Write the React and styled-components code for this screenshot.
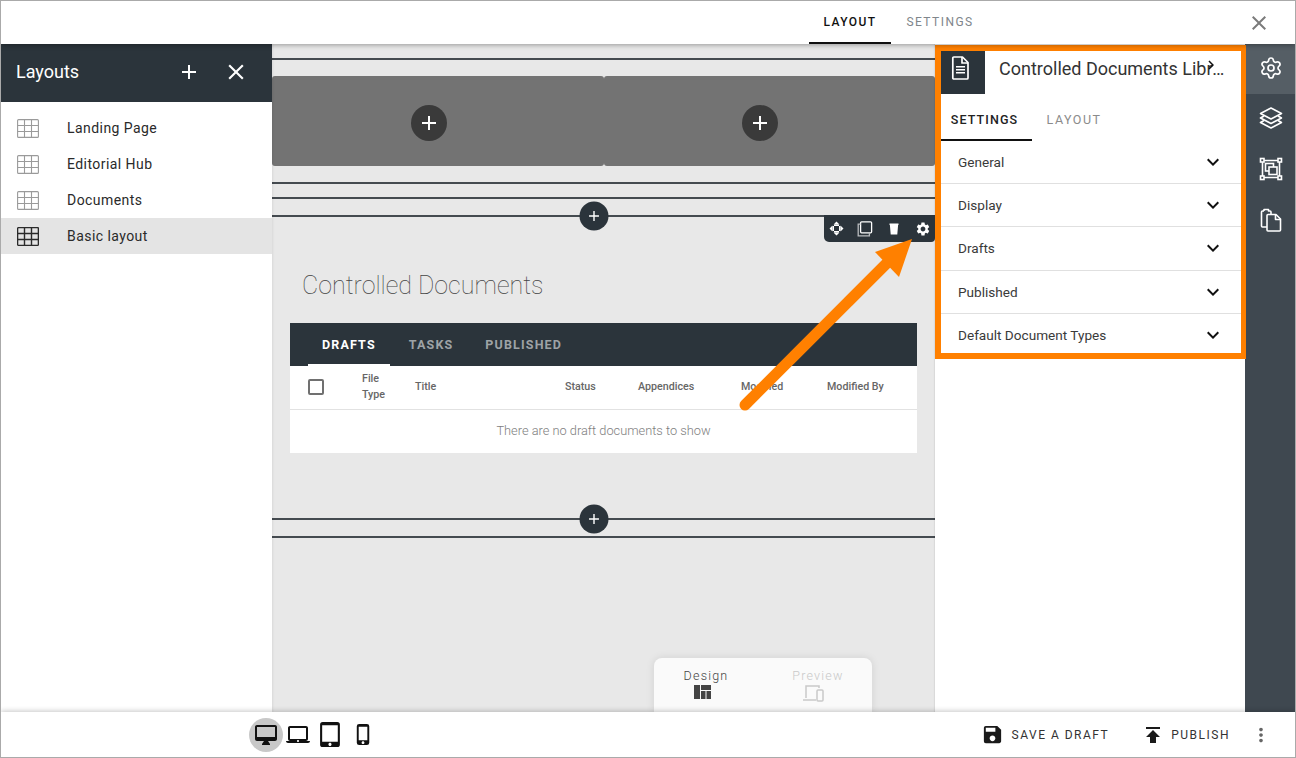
import React from "react";
import styled, { createGlobalStyle } from "styled-components";
import {
  MdAdd, MdClose, MdExpandMore, MdSave, MdPublish, MdMoreVert, MdOutlineDesktopMac, MdLaptopMac,
  MdTabletMac, MdPhoneIphone, MdSettings, MdChevronRight,
} from "react-icons/md";
import { Settings } from "lucide-react";

const Global = createGlobalStyle`
  html, body { margin: 0; padding: 0; background: #fff; }
  body { font-family: Roboto, "Liberation Sans", sans-serif; overflow: hidden; }
  * { box-sizing: border-box; }
`;

const Shell = styled.div`
  position: relative; width: 1296px; height: 758px; border: 1px solid #aaa;
  display: flex; flex-direction: column; background: #fff; overflow: hidden;
`;
const TopBar = styled.header`
  height: 43px; flex: none; display: flex; justify-content: flex-end; align-items: stretch;
  background: #fff; position: relative; z-index: 3; box-shadow: 0 1px 5px rgba(0,0,0,.35); padding-right: 24px;
`;
const TopTab = styled.div`
  width: ${p => p.$w}px; display: flex; align-items: center; justify-content: center; margin-right: ${p => p.$mr || 0}px;
  font-size: 12px; font-weight: ${p => (p.$active ? 500 : 400)}; letter-spacing: 1.45px;
  color: ${p => (p.$active ? "#111" : "#80868b")};
  border-bottom: 2px solid ${p => (p.$active ? "#111" : "transparent")};
`;
const TopClose = styled.div`
  display: flex; align-items: center; color: #7b7b7b; margin-left: 266px;
`;
const Main = styled.div`flex: 1; display: flex; min-height: 0;`;
const LeftPanel = styled.aside`
  width: 271px; flex: none; background: #fff; position: relative; z-index: 2; box-shadow: 1px 0 2px rgba(0,0,0,.07);
`;
const LeftHead = styled.div`
  height: 58px; background: #2b343b; color: #fff; display: flex; align-items: center; padding: 0 23px 3px 15px; margin-bottom: 8px;
`;
const LeftTitle = styled.div`flex: 1; font-size: 18px;`;
const HeadBtn = styled.span`display: flex; margin-left: ${p => p.$ml || 0}px;`;
const LayoutRow = styled.div`
  height: 36px; display: flex; align-items: center; padding-left: 16px; font-size: 14px; letter-spacing: .44px; color: #2a2a2a;
  background: ${p => (p.$active ? "#e4e4e4" : "transparent")};
`;
const RowLabel = styled.span`margin-left: 28px;`;

const Canvas = styled.main`
  width: 663px; flex: none; background: #e8e8e8; position: relative; padding-top: 14px;
`;
const Rule = styled.div`
  height: 2px; background: #454b50; position: relative; margin-top: ${p => p.$mt || 0}px;
`;
const RoundPlus = styled.div`
  position: absolute; left: 50%; top: 50%; transform: translate(-50%, -50%); width: 29px; height: 29px; border-radius: 50%;
  background: #2b343b; color: #fff; display: flex; align-items: center; justify-content: center; margin-left: -10px; z-index: 1;
`;
const Cells = styled.div`display: flex; margin: 16px 0 16px;`;
const Cell = styled.div`
  flex: 1; height: 90px; border-radius: 3px; background: #737373; display: flex; align-items: center; justify-content: center; padding: 4px 18px 0 0;
`;
const CellPlus = styled.div`
  width: 36px; height: 36px; border-radius: 50%; background: #3a3a3a; color: #fff; display: flex; align-items: center; justify-content: center;
`;
const WidgetBar = styled.div`
  position: absolute; right: 0; top: 171px; width: 111px; height: 27px; background: #2b343b; border-radius: 0 0 4px 5px;
  display: flex; align-items: center; justify-content: center; color: #fff; z-index: 1;
`;
const WidgetTool = styled.span`width: 29px; flex: none; display: flex; justify-content: center;`;
const WidgetArea = styled.section`padding: 0 18px 0 18px;`;
const WidgetTitle = styled.h2`
  margin: 53px 0 21px 12px; height: 32px; line-height: 32px; font-size: 25px; font-weight: 100; color: #444;
`;
const TableTabs = styled.div`
  height: 43px; background: #2b343b; display: flex; padding-left: 18px;
`;
const TableTab = styled.div`
  display: flex; align-items: center; padding: 2px 14px 0 14px; margin-right: ${p => p.$mr || 0}px; font-size: 12.5px; font-weight: 700; letter-spacing: 1.15px;
  color: ${p => (p.$active ? "#fff" : "#9ea3a6")}; border-bottom: 2px solid ${p => (p.$active ? "#fff" : "transparent")};
`;
const TableBody = styled.div`background: #fff;`;
const HeaderRow = styled.div`
  height: 44px; display: grid; grid-template-columns: 72px 53px 150px 73px 103px 86px 1fr; align-items: center;
  border-bottom: 1px solid #e2e2e2; font-size: 10.7px; font-weight: 500; color: #666; line-height: 16px; padding-bottom: 2px;
`;
const Check = styled.div`
  width: 16px; height: 16px; border: 2px solid #707070; border-radius: 2px; margin-left: 18px;
`;
const Empty = styled.div`
  height: 43px; display: flex; align-items: center; justify-content: center; font-size: 12.8px; font-weight: 300; color: #7e7e7e; padding-bottom: 3px;
`;
const ModeCard = styled.div`
  position: absolute; left: 382px; bottom: 0; width: 218px; height: 54px; background: #fafafa; border-radius: 8px 8px 0 0;
  box-shadow: 0 0 8px rgba(0,0,0,.1); display: flex; padding: 10px 0 0 16px; gap: 40px;
`;
const Mode = styled.div`
  width: 72px; display: flex; flex-direction: column; align-items: center; gap: 2px; font-size: 12.5px; font-weight: 300; letter-spacing: 1.2px;
  color: ${p => (p.$off ? "#c9c9c9" : "#444")};
`;
const ModeGlyph = styled.span`display: flex; margin-right: ${p => p.$mr}px;`;

const Panel = styled.aside`
  width: 310px; flex: none; background: #fff; position: relative; padding: 7px 4px 0 6px; box-shadow: -1px 0 1px rgba(0,0,0,.06);
`;
const Frame = styled.div`
  position: absolute; left: 0; top: 1px; width: 311px; height: 314px; border: solid #ff8000; border-width: 6px 5px 6px 6px; z-index: 2; pointer-events: none;
`;
const PanelHead = styled.div`height: 43px; display: flex; align-items: center; position: relative;`;
const DocBlock = styled.div`
  width: 44px; height: 43px; background: #2b343b; display: flex; align-items: flex-start; justify-content: center; padding: 5px 6px 0 0; flex: none;
`;
const PanelTitle = styled.div`
  margin-left: 14px; width: 226px; white-space: nowrap; overflow: hidden; text-overflow: ellipsis; font-size: 18px; color: #333; padding-bottom: 9px;
`;
const TitleCaret = styled.span`
  position: absolute; left: 261px; top: 5px; display: flex; color: #111;
`;
const PanelTabs = styled.div`display: flex; height: 47px;`;
const PanelTab = styled.div`
  width: ${p => p.$w}px; display: flex; align-items: center; justify-content: center; padding: 5px ${p => p.$pr || 0}px 0 0; font-size: 12.5px; font-weight: ${p => (p.$active ? 500 : 400)};
  letter-spacing: ${p => (p.$active ? 1.1 : 1.5)}px;
  color: ${p => (p.$active ? "#222" : "#8b8b8b")}; border-bottom: 2px solid ${p => (p.$active ? "#111" : "transparent")};
`;
const AccRow = styled.div`
  height: 43.2px; display: flex; align-items: center; justify-content: space-between; padding: 0 16px 0 17px; font-size: 13.6px; color: #3a3a3a;
  border-bottom: 1px solid ${p => (p.$last ? "transparent" : "#e0e0e0")};
`;
const AccChevron = styled.span`display: flex; color: #111;`;

const Rail = styled.nav`width: 50px; flex: none; background: #3f4850; color: #fff; position: relative; z-index: 1;`;
const RailItem = styled.div`
  height: ${p => p.$h}px; display: flex; align-items: center; justify-content: center; padding: 0 0 2px 2px; background: ${p => (p.$active ? "#555e65" : "transparent")};
`;

const BottomBar = styled.footer`
  height: 45px; flex: none; background: #fff; display: flex; align-items: center; position: relative; z-index: 3;
  box-shadow: 0 -1px 5px rgba(0,0,0,.22); padding-left: 248px;
`;
const DeviceBtn = styled.div`
  width: ${p => p.$w}px; height: 34px; display: flex; align-items: center; justify-content: center; border-radius: 50%; color: #111;
  background: ${p => (p.$active ? "#c8c8c8" : "transparent")};
`;
const Spacer = styled.div`flex: 1;`;
const Action = styled.div`
  display: flex; align-items: center; gap: ${p => p.$gap}px; font-size: 12px; letter-spacing: 1.5px; color: #333; margin-right: ${p => p.$mr}px;
`;
const ActionIcon = styled.span`display: flex; color: #1a1a1a;`;
const More = styled.span`display: flex; color: #666; margin-right: 23px;`;

const ArrowLayer = styled.svg`
  position: absolute; left: -1px; top: -1px; width: 1296px; height: 758px; z-index: 5; pointer-events: none;
`;

const GridIcon = ({ dark }) => (
  <svg width="22" height="19" viewBox="0 0 22 19" fill="none" stroke={dark ? "#2a2a2a" : "#9a9a9a"} strokeWidth={dark ? 1.4 : 1.1}>
    <rect x=".6" y=".6" width="20.8" height="17.8" rx="1" />
    <path d="M7.5 .6v17.8M14.5 .6v17.8M.6 6.500h20.8M.6 12.500h20.8" />
  </svg>
);
const MoveIcon = () => (
  <svg width="15" height="15" viewBox="0 0 15 15" fill="#fff">
    <path d="M7.500 .5 10.500 3.500H4.500ZM7.500 14.500 4.500 11.500H10.500ZM.5 7.500 3.500 4.500V10.500ZM14.500 7.500 11.500 10.500V4.500Z" />
    <path d="M5 3.500h5v1.500H5zM5 10h5v1.500H5zM3.500 5H5v5H3.500zM10 5h1.500v5H10z" />
  </svg>
);
const CopyIcon = () => (
  <svg width="16" height="16" viewBox="0 0 16 16" fill="none" stroke="#fff" strokeWidth="1.3">
    <rect x="3.600" y=".8" width="11" height="11" rx="1" />
    <path d="M3.600 3.200H1.200V14.800H12.400V11.800" stroke="#b9bcbf" />
  </svg>
);
const TrashIcon = () => (
  <svg width="14" height="14" viewBox="0 0 14 14" fill="#fff"><path d="M2.500 1.500h9v1.500h-.4L10.300 12.500H3.700L2.900 3h-.4z" /></svg>
);
const DocIcon = () => (
  <svg width="18" height="24" viewBox="0 0 18 24" fill="none" stroke="#fff" strokeWidth="1.7" strokeLinejoin="round">
    <path d="M2.800 1h8.700L17 6.500V22a1 1 0 0 1-1 1H2.800a1 1 0 0 1-1-1V2a1 1 0 0 1 1-1Z" />
    <path d="M11 1v6h6" />
    <path d="M5 10.800h9M5 13.800h9M5 16.800h9" strokeWidth="1.500" />
  </svg>
);
const LayersIcon = () => (
  <svg width="24" height="24" viewBox="0 0 24 24" fill="none" stroke="#fff" strokeWidth="1.6" strokeLinejoin="round">
    <path d="M12 2 22.500 7.500 12 13 1.500 7.500Z" />
    <path d="M5 10 1.500 12 12 17.500 22.500 12 19 10" />
    <path d="M5 14.500 1.500 16.500 12 22 22.500 16.500 19 14.500" />
  </svg>
);
const SelectIcon = () => (
  <svg width="24" height="24" viewBox="0 0 24 24" fill="none" stroke="#fff" strokeWidth="1.6">
    <path d="M3.500 3.500h17v17h-17z" />
    <rect x="1.500" y="1.500" width="3.500" height="3.500" fill="#3f4850" />
    <rect x="19" y="1.500" width="3.500" height="3.500" fill="#3f4850" />
    <rect x="1.500" y="19" width="3.500" height="3.500" fill="#3f4850" />
    <rect x="19" y="19" width="3.500" height="3.500" fill="#3f4850" />
    <rect x="6.500" y="6.500" width="8" height="7.500" />
    <rect x="10" y="10" width="8" height="7.500" fill="#3f4850" />
  </svg>
);
const PagesIcon = () => (
  <svg width="24" height="24" viewBox="0 0 24 24" fill="none" stroke="#fff" strokeWidth="1.6" strokeLinejoin="round">
    <path d="M8 19H3.500a1 1 0 0 1-1-1V4a1 1 0 0 1 1-1h1.500M5 3V1.500h4.500V3H11a1 1 0 0 1 1 1v2.500" />
    <path d="M9 6.500h8l4.500 4.500v11a1 1 0 0 1-1 1H9a1 1 0 0 1-1-1V7.500a1 1 0 0 1 1-1Z" />
    <path d="M16.500 6.500V11.500H21.500" />
  </svg>
);
const DesignIcon = () => (
  <svg width="17" height="14" viewBox="0 0 17 14" fill="#444"><path d="M0 0h6v14H0zM7 0h10v5H7zM7 6h4.500v8H7zM12.500 6H17v8h-4.500z" /></svg>
);
const PreviewIcon = () => (
  <svg width="24" height="17" viewBox="0 0 24 17" fill="none" stroke="#c9c9c9" strokeWidth="1.500">
    <path d="M3 13V1h13v2M0 15h13" />
    <rect x="14" y="5" width="6" height="11" rx="1" />
  </svg>
);

export default function App() {
  return (
    <Shell>
      <Global />
      <TopBar>
        <TopTab $active $w={82} $mr={8}>LAYOUT</TopTab>
        <TopTab $w={82}>SETTINGS</TopTab>
        <TopClose><MdClose size={24} /></TopClose>
      </TopBar>
      <Main>
        <LeftPanel>
          <LeftHead>
            <LeftTitle>Layouts</LeftTitle>
            <HeadBtn><MdAdd size={24} /></HeadBtn>
            <HeadBtn $ml={22}><MdClose size={26} /></HeadBtn>
          </LeftHead>
          {["Landing Page", "Editorial Hub", "Documents", "Basic layout"].map((t, i) => (
            <LayoutRow key={t} $active={i === 3}>
              <GridIcon dark={i === 3} />
              <RowLabel>{t}</RowLabel>
            </LayoutRow>
          ))}
        </LeftPanel>
        <Canvas>
          <Rule />
          <Cells>
            <Cell><CellPlus><MdAdd size={24} /></CellPlus></Cell>
            <Cell><CellPlus><MdAdd size={24} /></CellPlus></Cell>
          </Cells>
          <Rule />
          <Rule $mt={13} />
          <Rule $mt={16}><RoundPlus><MdAdd size={17} /></RoundPlus></Rule>
          <WidgetBar>
            <WidgetTool><MoveIcon /></WidgetTool>
            <WidgetTool><CopyIcon /></WidgetTool>
            <WidgetTool><TrashIcon /></WidgetTool>
            <WidgetTool><MdSettings size={16} /></WidgetTool>
          </WidgetBar>
          <WidgetArea>
            <WidgetTitle>Controlled Documents</WidgetTitle>
            <TableTabs>
              <TableTab $active $mr={5}>DRAFTS</TableTab>
              <TableTab $mr={4}>TASKS</TableTab>
              <TableTab>PUBLISHED</TableTab>
            </TableTabs>
            <TableBody>
              <HeaderRow>
                <Check />
                <span>File<br />Type</span>
                <span>Title</span>
                <span>Status</span>
                <span>Appendices</span>
                <span>Modified</span>
                <span>Modified By</span>
              </HeaderRow>
              <Empty>There are no draft documents to show</Empty>
            </TableBody>
          </WidgetArea>
          <Rule $mt={65}><RoundPlus><MdAdd size={17} /></RoundPlus></Rule>
          <Rule $mt={16} />
          <ModeCard>
            <Mode>Design<ModeGlyph $mr={8}><DesignIcon /></ModeGlyph></Mode>
            <Mode $off>Preview<ModeGlyph $mr={6}><PreviewIcon /></ModeGlyph></Mode>
          </ModeCard>
        </Canvas>
        <Panel>
          <Frame />
          <PanelHead>
            <DocBlock><DocIcon /></DocBlock>
            <PanelTitle>Controlled Documents Library</PanelTitle>
            <TitleCaret><MdChevronRight size={18} /></TitleCaret>
          </PanelHead>
          <PanelTabs>
            <PanelTab $active $w={91} $pr={4}>SETTINGS</PanelTab>
            <PanelTab $w={84}>LAYOUT</PanelTab>
          </PanelTabs>
          {["General", "Display", "Drafts", "Published", "Default Document Types"].map((t, i) => (
            <AccRow key={t} $last={i === 4}>
              {t}
              <AccChevron><MdExpandMore size={24} /></AccChevron>
            </AccRow>
          ))}
        </Panel>
        <Rail>
          <RailItem $active $h={50}><Settings size={24} strokeWidth={1.7} /></RailItem>
          <RailItem $h={50}><LayersIcon /></RailItem>
          <RailItem $h={51}><SelectIcon /></RailItem>
          <RailItem $h={51}><PagesIcon /></RailItem>
        </Rail>
      </Main>
      <BottomBar>
        <DeviceBtn $active $w={34}><MdOutlineDesktopMac size={24} /></DeviceBtn>
        <DeviceBtn $w={30}><MdLaptopMac size={24} /></DeviceBtn>
        <DeviceBtn $w={34}><MdTabletMac size={25} /></DeviceBtn>
        <DeviceBtn $w={32}><MdPhoneIphone size={23} /></DeviceBtn>
        <Spacer />
        <Action $mr={32} $gap={8}><ActionIcon><MdSave size={23} /></ActionIcon>SAVE A DRAFT</Action>
        <Action $mr={20} $gap={6}><ActionIcon><MdPublish size={24} /></ActionIcon>PUBLISH</Action>
        <More><MdMoreVert size={22} /></More>
      </BottomBar>
      <ArrowLayer viewBox="0 0 1296 758">
        <path d="M745 405 888 262" stroke="#ff8000" strokeWidth="11" strokeLinecap="round" fill="none" />
        <path d="M912 239 875 252 899 277Z" fill="#ff8000" />
      </ArrowLayer>
    </Shell>
  );
}
